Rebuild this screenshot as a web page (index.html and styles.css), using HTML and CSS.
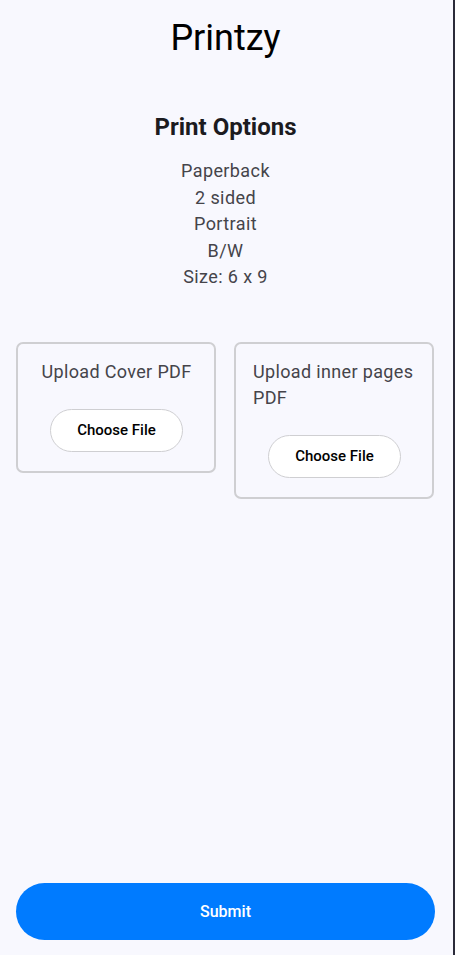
FILE: index.html
```html
<!DOCTYPE html>
<html>
<head>
<meta charset="utf-8">
<link rel="stylesheet" href="styles.css">
</head>
<body>
<div class="app">
  <h1 class="title">Printzy</h1>
  <h2 class="section-title">Print Options</h2>
  <div class="options">
    <div>Paperback</div>
    <div>2 sided</div>
    <div>Portrait</div>
    <div>B/W</div>
    <div>Size: 6 x 9</div>
  </div>
  <div class="uploads">
    <div class="card">
      <div class="card-label">Upload Cover PDF</div>
      <button class="choose">Choose File</button>
    </div>
    <div class="card">
      <div class="card-label">Upload inner pages PDF</div>
      <button class="choose">Choose File</button>
    </div>
  </div>
  <button class="submit">Submit</button>
</div>
</body>
</html>
```
FILE: styles.css
```css
html, body {
  margin: 0;
  padding: 0;
  background: #2b2b3a;
}
body {
  font-family: Roboto, "Noto Sans", sans-serif;
}
.app {
  width: 453px;
  height: 955px;
  background: #f8f8fe;
  display: flex;
  flex-direction: column;
  box-sizing: border-box;
  padding: 17px 18px 15px 16px;
}
.title {
  margin: 0;
  font-size: 36px;
  line-height: 42px;
  font-weight: 400;
  color: #000;
  text-align: center;
}
.section-title {
  margin: 53px 0 0;
  font-size: 24px;
  line-height: 30px;
  font-weight: 700;
  color: #1c1b1f;
  text-align: center;
}
.options {
  margin-top: 16px;
  font-size: 18px;
  line-height: 26.5px;
  letter-spacing: 0.4px;
  color: #45444a;
  text-align: center;
}
.uploads {
  margin-top: 51px;
  display: flex;
  align-items: flex-start;
  gap: 18px;
}
.card {
  width: 200px;
  box-sizing: border-box;
  border: 2px solid #cfcfd2;
  border-radius: 7px;
  padding: 15px 16px 19px 17px;
  display: flex;
  flex-direction: column;
  align-items: center;
  gap: 24px;
}
.card-label {
  font-size: 18px;
  line-height: 26px;
  letter-spacing: 0.35px;
  color: #45444a;
}
.choose {
  width: 133px;
  height: 43px;
  border: 1px solid #cfcfd2;
  border-radius: 22px;
  background: #fff;
  font-family: Roboto, sans-serif;
  font-size: 15px;
  font-weight: 500;
  color: #000;
  padding: 0;
}
.submit {
  margin-top: auto;
  height: 57px;
  width: 419px;
  border: none;
  border-radius: 29px;
  background: #007bff;
  color: #fff;
  font-family: Roboto, sans-serif;
  font-size: 16px;
  font-weight: 500;
}
```
